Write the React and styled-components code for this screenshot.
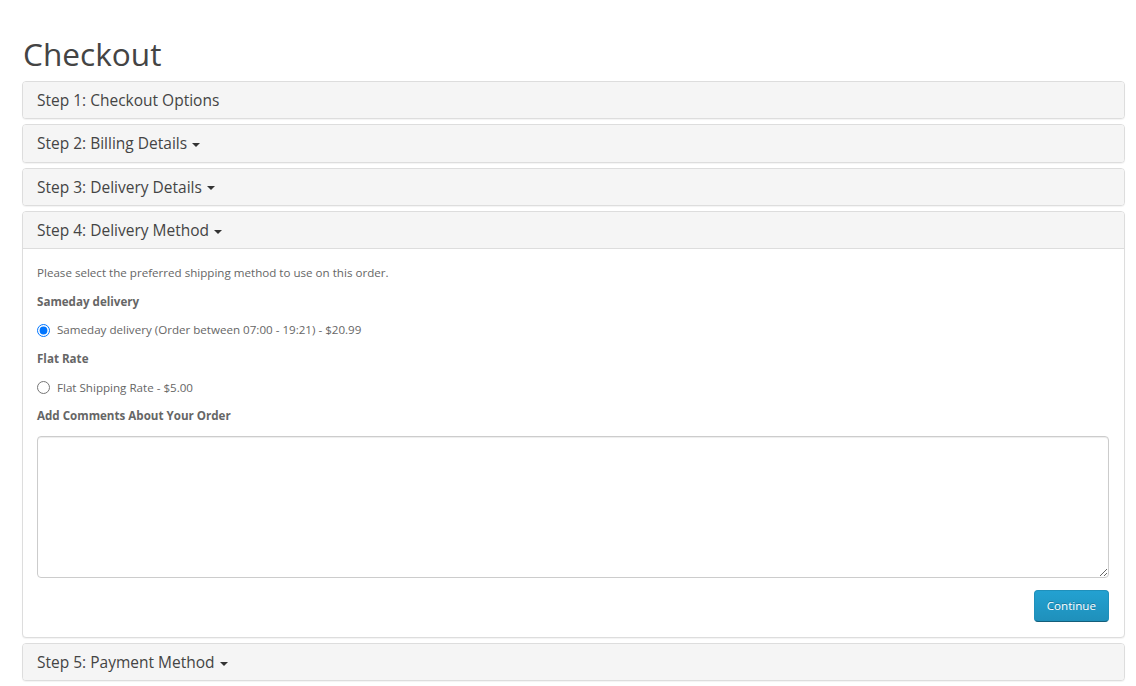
import React from 'react';
import styled, { createGlobalStyle } from 'styled-components';

const GlobalStyle = createGlobalStyle`
  body {
    margin: 0;
    background: #fff;
    font-family: 'Open Sans', 'Liberation Sans', sans-serif;
    font-size: 11.6px;
    color: #666;
  }
  * { box-sizing: border-box; }
`;

const Page = styled.div`
  padding: 36px 11px 0 22px;
`;

const Title = styled.h1`
  margin: 0 0 9px 1px;
  font-size: 31.6px;
  font-weight: 400;
  line-height: 36px;
  color: #444;
`;

const Panel = styled.div`
  background: #fff;
  border: 1px solid #ddd;
  border-radius: 4px;
  box-shadow: 0 1px 1px rgba(0, 0, 0, 0.05);
  margin-bottom: 5px;
  overflow: hidden;
`;

const Heading = styled.div`
  background: #f5f5f5;
  padding: 10px 14px;
  border-bottom: ${p => (p.$open ? '1px solid #ddd' : 'none')};
`;

const HeadingText = styled.h4`
  margin: 0;
  font-size: 15.5px;
  font-weight: 400;
  line-height: 16.3px;
  color: #444;
`;

const Caret = styled.span`
  display: inline-block;
  width: 0;
  height: 0;
  margin-left: 5px;
  vertical-align: middle;
  border-top: 4px solid #333;
  border-left: 4px solid transparent;
  border-right: 4px solid transparent;
`;

const Body = styled.div`
  padding: 15px 15px 15px 14px;
`;

const Text = styled.p`
  margin: 0 0 10px;
  line-height: 18.6px;
  font-weight: ${p => (p.$bold ? 700 : 400)};
`;

const RadioRow = styled.label`
  display: flex;
  align-items: center;
  margin: 0 0 10px;
  line-height: 18.6px;
  cursor: pointer;

  input {
    width: 13px;
    height: 13px;
    margin: 0 7px 0 0;
  }
`;

const Comment = styled.textarea`
  display: block;
  width: 100%;
  height: 142px;
  padding: 6px 12px;
  border: 1px solid #ccc;
  border-radius: 4px;
  box-shadow: inset 0 1px 1px rgba(0, 0, 0, 0.075);
  font-family: inherit;
  font-size: 12px;
  color: #555;
`;

const Actions = styled.div`
  display: flex;
  justify-content: flex-end;
  margin-top: 12px;
`;

const Button = styled.button`
  height: 32px;
  padding: 0 12px;
  font-family: inherit;
  font-size: 11.6px;
  color: #fff;
  text-shadow: 0 -1px 0 rgba(0, 0, 0, 0.25);
  background-color: #229ac8;
  background-image: linear-gradient(to bottom, #23a1d1, #1f90bb);
  border: 1px solid;
  border-color: #1f90bb #1f90bb #145e7a;
  border-radius: 4px;
  cursor: pointer;
`;

const steps = [
  { title: 'Step 1: Checkout Options', caret: false },
  { title: 'Step 2: Billing Details', caret: true },
  { title: 'Step 3: Delivery Details', caret: true },
  { title: 'Step 4: Delivery Method', caret: true, open: true },
  { title: 'Step 5: Payment Method', caret: true },
];

const DeliveryMethod = () => (
  <Body>
    <Text>Please select the preferred shipping method to use on this order.</Text>
    <Text $bold>Sameday delivery</Text>
    <RadioRow>
      <input type="radio" name="shipping" defaultChecked />
      Sameday delivery (Order between 07:00 - 19:21) - $20.99
    </RadioRow>
    <Text $bold>Flat Rate</Text>
    <RadioRow>
      <input type="radio" name="shipping" />
      Flat Shipping Rate - $5.00
    </RadioRow>
    <Text $bold>Add Comments About Your Order</Text>
    <Comment rows={8} />
    <Actions>
      <Button>Continue</Button>
    </Actions>
  </Body>
);

const App = () => (
  <>
    <GlobalStyle />
    <Page>
      <Title>Checkout</Title>
      {steps.map(step => (
        <Panel key={step.title}>
          <Heading $open={step.open}>
            <HeadingText>
              {step.title}
              {step.caret && <Caret />}
            </HeadingText>
          </Heading>
          {step.open && <DeliveryMethod />}
        </Panel>
      ))}
    </Page>
  </>
);

export default App;
